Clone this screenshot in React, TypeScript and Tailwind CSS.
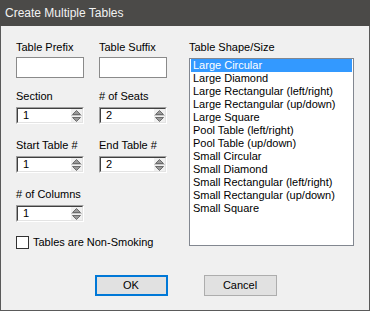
import React from "react";

const font = { fontFamily: '"Liberation Sans", Arial, sans-serif' };

function Label({ children }: { children: React.ReactNode }) {
  return <div className="h-[13px] leading-[13px] text-[11px] text-black whitespace-nowrap">{children}</div>;
}

function TextBox() {
  return <div className="w-[68px] h-[21px] bg-white border border-[#8a8a8a]" />;
}

function Spin({ value }: { value: string }) {
  return (
    <div className="w-[68px] h-[17px] flex bg-white border-t border-l border-[#a0a0a0] border-r border-b border-r-white border-b-white">
      <div className="flex-1 flex border-t border-l border-[#404040] border-r border-b border-r-[#e3e3e3] border-b-[#e3e3e3]">
        <div className="flex-1 pl-[5px] text-[11px] leading-[13px] text-black">{value}</div>
        <div className="w-[11px] flex flex-col bg-[#f0f0f0]">
          <div className="flex-1 flex items-center justify-center border-b border-[#c8c8c8]">
            <svg width="9" height="5" viewBox="0 0 9 5">
              <polygon points="4.5,0.5 8.5,4.5 0.5,4.5" fill="#9a9a9a" stroke="#555" strokeWidth="0.8" />
            </svg>
          </div>
          <div className="flex-1 flex items-center justify-center">
            <svg width="9" height="5" viewBox="0 0 9 5">
              <polygon points="0.5,0.5 8.5,0.5 4.5,4.5" fill="#9a9a9a" stroke="#555" strokeWidth="0.8" />
            </svg>
          </div>
        </div>
      </div>
    </div>
  );
}

const items = [
  "Large Circular",
  "Large Diamond",
  "Large Rectangular (left/right)",
  "Large Rectangular (up/down)",
  "Large Square",
  "Pool Table (left/right)",
  "Pool Table (up/down)",
  "Small Circular",
  "Small Diamond",
  "Small Rectangular (left/right)",
  "Small Rectangular (up/down)",
  "Small Square",
];

export default function App() {
  return (
    <div style={font} className="w-[370px] h-[311px] flex flex-col bg-[#f0f0f0] border border-t-0 border-[#5a5a5a]">
      <div className="h-[26px] -mx-px bg-[#4b4a48] flex items-center pl-[5px] text-[12px] text-[#f2f2f2]">
        Create Multiple Tables
      </div>
      <div className="flex pt-[15px] pl-[15px]">
        <div className="flex flex-col w-[173px]">
          <div className="flex gap-[15px]">
            <div className="flex flex-col gap-[3px]">
              <Label>Table Prefix</Label>
              <TextBox />
            </div>
            <div className="flex flex-col gap-[3px]">
              <Label>Table Suffix</Label>
              <TextBox />
            </div>
          </div>
          <div className="flex gap-[15px] mt-[12px]">
            <div className="flex flex-col gap-[4px]">
              <Label>Section</Label>
              <Spin value="1" />
            </div>
            <div className="flex flex-col gap-[4px]">
              <Label># of Seats</Label>
              <Spin value="2" />
            </div>
          </div>
          <div className="flex gap-[15px] mt-[15px]">
            <div className="flex flex-col gap-[4px]">
              <Label>Start Table #</Label>
              <Spin value="1" />
            </div>
            <div className="flex flex-col gap-[4px]">
              <Label>End Table #</Label>
              <Spin value="2" />
            </div>
          </div>
          <div className="flex flex-col gap-[4px] mt-[15px]">
            <Label># of Columns</Label>
            <Spin value="1" />
          </div>
          <div className="flex items-center gap-[4px] mt-[14px]">
            <div className="w-[13px] h-[13px] bg-white border border-[#333]" />
            <span className="text-[11px] leading-[13px] text-black">Tables are Non-Smoking</span>
          </div>
        </div>
        <div className="flex flex-col gap-[4px]">
          <Label>Table Shape/Size</Label>
          <div className="w-[165px] h-[188px] bg-white border border-[#828790] px-px">
            {items.map((it, i) => (
              <div
                key={it}
                className={
                  "h-[13px] leading-[13px] text-[11px] pl-[2px] whitespace-nowrap " +
                  (i === 0 ? "bg-[#3399ff] text-white" : "text-black")
                }
              >
                {it}
              </div>
            ))}
          </div>
        </div>
      </div>
      <div className="flex justify-center gap-[36px] mt-[26px] pl-px">
        <div className="w-[73px] h-[21px] bg-[#e1e1e1] border-2 border-[#0078d7] flex items-center justify-center text-[11px] text-black">
          OK
        </div>
        <div className="w-[73px] h-[21px] bg-[#e1e1e1] border border-[#adadad] flex items-center justify-center text-[11px] text-black">
          Cancel
        </div>
      </div>
    </div>
  );
}
